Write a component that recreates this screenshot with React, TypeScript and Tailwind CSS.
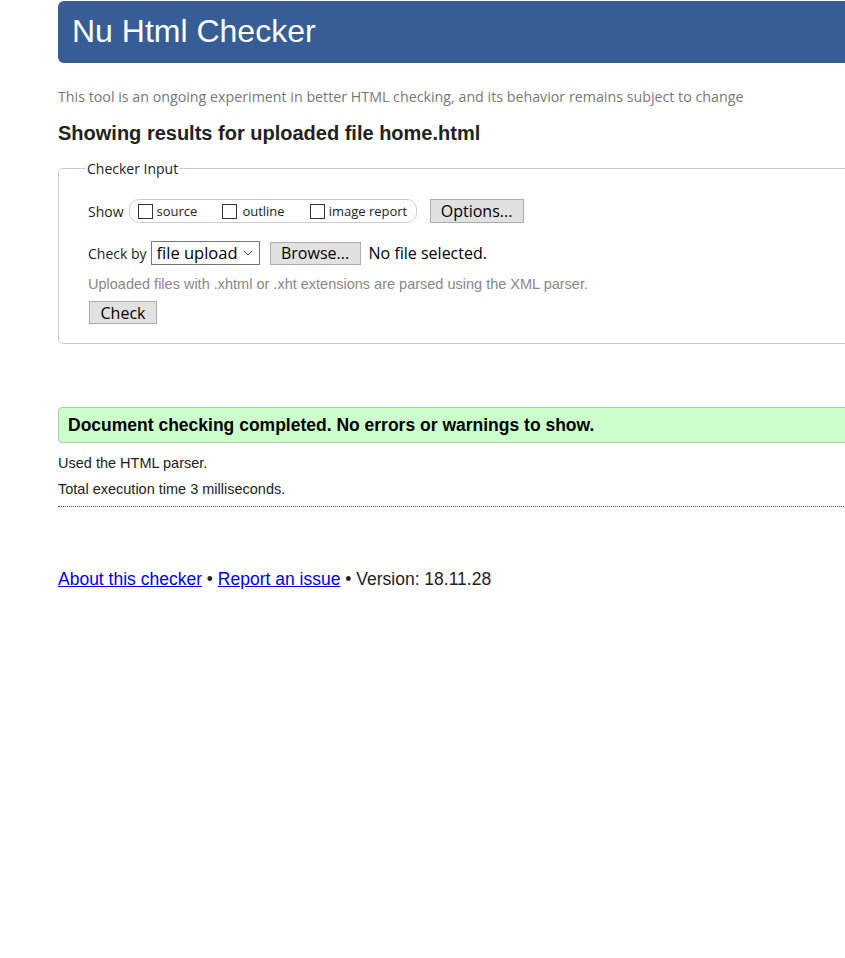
export default function App() {
  const seg = { fontFamily: '"Open Sans", "Noto Sans", sans-serif' };
  const arial = { fontFamily: '"Liberation Sans", Arial, sans-serif' };
  return (
    <div className="w-[845px] h-[958px] overflow-hidden bg-white" style={arial}>
      <div className="ml-[58px] w-[900px]">
        <div className="mt-[1px] h-[62px] rounded-[6px] bg-[#365d95] pl-[14px] flex items-center">
          <h1 className="text-[32px] text-white leading-none mt-[-2px]" style={arial}>Nu Html Checker</h1>
        </div>
        <p className="mt-[24px] text-[14.25px] text-[#777] leading-[20px] whitespace-nowrap" style={seg}>
          This tool is an ongoing experiment in better HTML checking, and its behavior remains subject to change
        </p>
        <h2 className="mt-[14px] text-[20px] font-bold text-[#222] leading-[24px]">Showing results for uploaded file home.html</h2>
        <fieldset className="mt-[13px] border border-[#ccc] rounded-[5px] pl-[29px] pr-3 pt-[4px] pb-[17px]">
          <legend className="ml-[-2px] px-[1px] text-[14px] text-[#222]" style={seg}>Checker Input</legend>
          <div className="flex items-center h-[24px] mt-[16px]">
            <span className="text-[14px] text-[#222] mr-[5px]" style={seg}>Show</span>
            <div className="flex items-center h-[24px] border border-[#ccc] rounded-[10px] pl-[8px] w-[288px] whitespace-nowrap shrink-0" style={seg}>
              <span className="w-[15px] h-[15px] border border-[#333] bg-white mr-[4px] shrink-0" />
              <span className="text-[13px] text-[#222] mt-[2px] mr-[25px]">source</span>
              <span className="w-[15px] h-[15px] border border-[#333] bg-white mr-[5px] shrink-0" />
              <span className="text-[13px] text-[#222] mt-[2px] mr-[25px]">outline</span>
              <span className="w-[15px] h-[15px] border border-[#333] bg-white mr-[4px] shrink-0" />
              <span className="text-[13px] text-[#222] mt-[2px]">image report</span>
            </div>
            <button className="ml-[13px] w-[94px] h-[24px] bg-[#e1e1e1] border border-[#adadad] text-[16px] text-black leading-none shrink-0" style={seg}>Options...</button>
          </div>
          <div className="flex items-center h-[24px] mt-[18px]" style={seg}>
            <span className="text-[14px] text-[#222] mr-[4px]">Check by</span>
            <div className="w-[109px] h-[24px] border border-[#767676] flex items-center pl-[5px] pr-[6px] justify-between">
              <span className="text-[16.5px] text-black leading-none">file upload</span>
              <svg width="10" height="6" viewBox="0 0 10 6"><path d="M1 1 L5 5 L9 1" fill="none" stroke="#444" strokeWidth="1" /></svg>
            </div>
            <button className="ml-[10px] w-[91px] h-[23px] bg-[#e1e1e1] border border-[#adadad] text-[16px] text-black leading-none">Browse...</button>
            <span className="ml-[8px] text-[16px] text-black">No file selected.</span>
          </div>
          <p className="mt-[9px] text-[14.5px] text-[#888] leading-[20px] whitespace-nowrap" style={arial}>Uploaded files with .xhtml or .xht extensions are parsed using the XML parser.</p>
          <button className="mt-[7px] ml-[1px] w-[68px] h-[23px] bg-[#e1e1e1] border border-[#adadad] text-[16px] text-black leading-none" style={seg}>Check</button>
        </fieldset>
        <div className="mt-[63px] h-[36px] bg-[#ccffcc] border border-[#aaccaa] rounded-[4px] pl-[9px] flex items-center">
          <span className="text-[17.5px] font-bold text-black mt-[1px]">Document checking completed. No errors or warnings to show.</span>
        </div>
        <p className="mt-[10px] text-[14.5px] text-[#222] leading-[20px]">Used the HTML parser.</p>
        <p className="mt-[6px] text-[14.5px] text-[#222] leading-[20px]">Total execution time 3 milliseconds.</p>
        <div className="mt-[7px] border-b border-dotted border-[#555]" />
        <p className="mt-[60px] text-[17.5px] text-[#222] leading-[24px]">
          <a className="text-[#0000ee] underline" href="#">About this checker</a> • <a className="text-[#0000ee] underline" href="#">Report an issue</a> • Version: 18.11.28
        </p>
      </div>
    </div>
  );
}
